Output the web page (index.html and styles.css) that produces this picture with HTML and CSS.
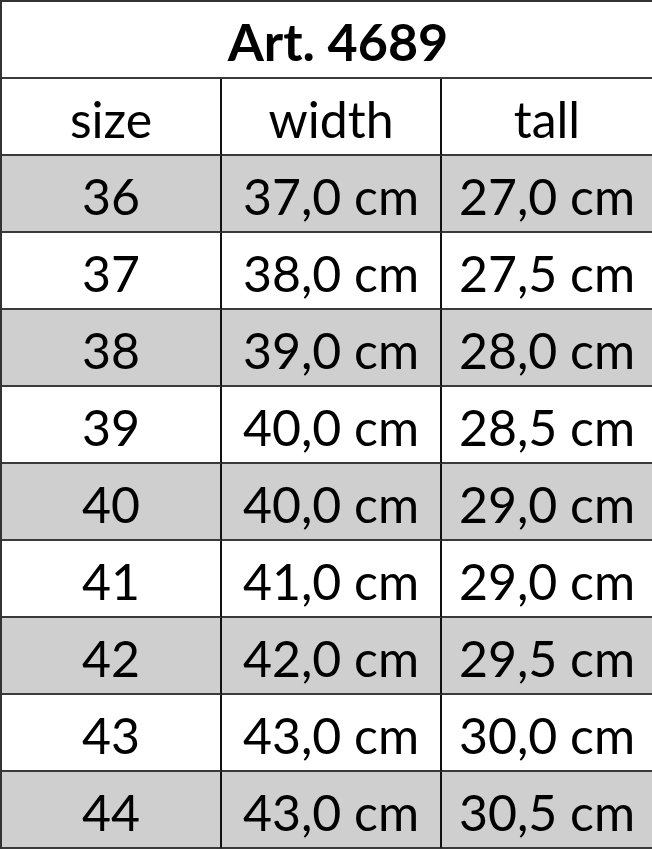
FILE: index.html
```html
<!DOCTYPE html>
<html>
<head>
<meta charset="utf-8">
<link rel="stylesheet" href="styles.css">
</head>
<body>
<div class="table">
  <div class="cell title">Art. 4689</div>
  <div class="cell c1">size</div><div class="cell c2">width</div><div class="cell c3">tall</div>
  <div class="cell c1 alt">36</div><div class="cell c2 alt">37,0 cm</div><div class="cell c3 alt">27,0 cm</div>
  <div class="cell c1">37</div><div class="cell c2">38,0 cm</div><div class="cell c3">27,5 cm</div>
  <div class="cell c1 alt">38</div><div class="cell c2 alt">39,0 cm</div><div class="cell c3 alt">28,0 cm</div>
  <div class="cell c1">39</div><div class="cell c2">40,0 cm</div><div class="cell c3">28,5 cm</div>
  <div class="cell c1 alt">40</div><div class="cell c2 alt">40,0 cm</div><div class="cell c3 alt">29,0 cm</div>
  <div class="cell c1">41</div><div class="cell c2">41,0 cm</div><div class="cell c3">29,0 cm</div>
  <div class="cell c1 alt">42</div><div class="cell c2 alt">42,0 cm</div><div class="cell c3 alt">29,5 cm</div>
  <div class="cell c1">43</div><div class="cell c2">43,0 cm</div><div class="cell c3">30,0 cm</div>
  <div class="cell c1 alt">44</div><div class="cell c2 alt">43,0 cm</div><div class="cell c3 alt">30,5 cm</div>
</div>
</body>
</html>
```

FILE: styles.css
```css
html, body {
  margin: 0;
  padding: 0;
  background: #ffffff;
  overflow: hidden;
}
.table {
  width: 652px;
  box-sizing: border-box;
  display: grid;
  grid-template-columns: 220px 220px 1fr;
  grid-auto-rows: 77px;
  border-top: 2px solid #333;
  border-left: 2px solid #333;
  font-family: Lato, "Open Sans", sans-serif;
  color: #000;
}
.cell {
  box-sizing: border-box;
  display: flex;
  align-items: center;
  justify-content: center;
  font-size: 50px;
  line-height: 1;
  padding-top: 4px;
  border-bottom: 2px solid #3a3a3a;
}
.c1, .c2 {
  border-right: 2px solid #111;
}
.title {
  grid-column: 1 / 4;
  font-weight: 700;
  font-size: 52px;
  padding-top: 2px;
  padding-left: 22px;
}
.alt {
  background: #cfcfcf;
}
```
